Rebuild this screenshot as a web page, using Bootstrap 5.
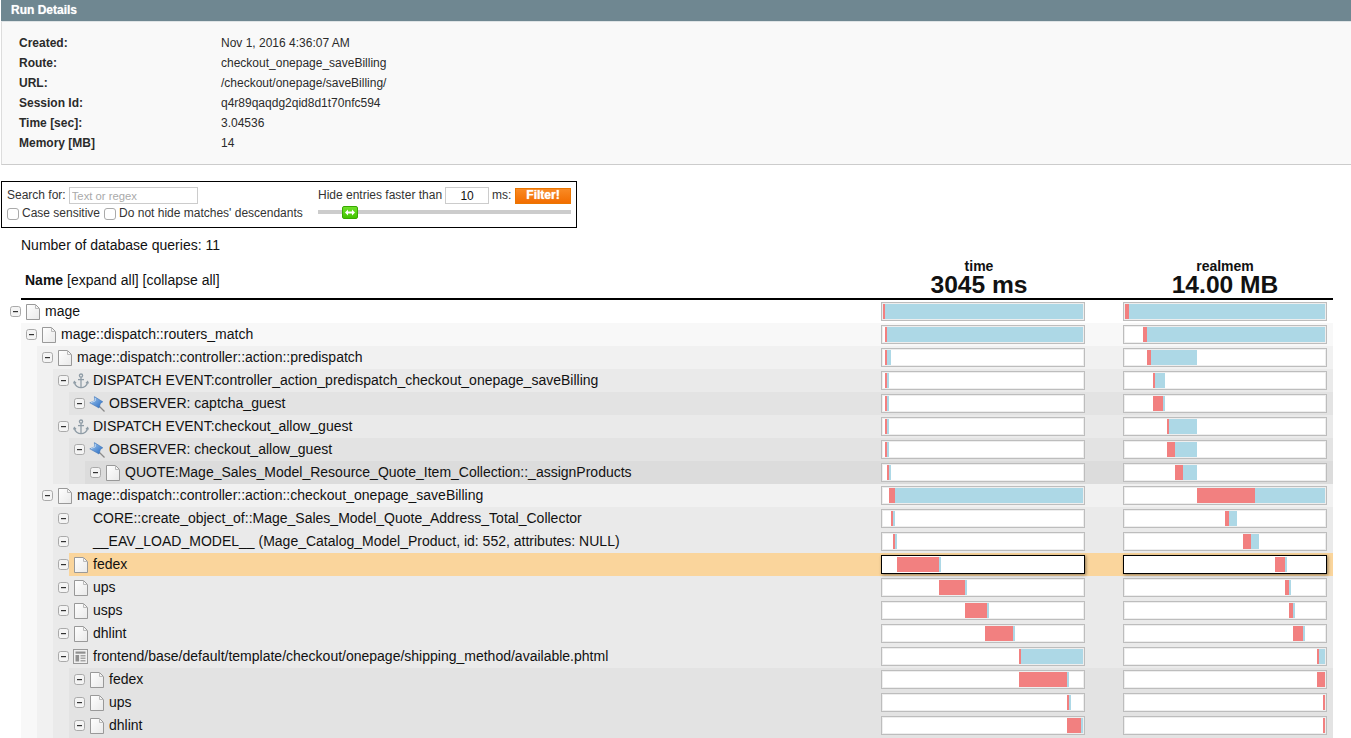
<!DOCTYPE html>
<html lang="en">
<head>
<meta charset="utf-8">
<title>Run Details</title>
<link href="https://cdn.jsdelivr.net/npm/bootstrap@5.3.0/dist/css/bootstrap.min.css" rel="stylesheet">
<style>
html,body{height:738px;overflow:hidden}
body{font-family:"Liberation Sans",Arial,sans-serif;font-size:12px;color:#111;background:#fff}
.head-bar{margin-left:1px;height:22px;background:#6f8791;border-bottom:1px solid #dfe4e6;color:#fff;font-weight:700;font-size:12px;line-height:20px;padding-left:10px;text-shadow:0 0 1px rgba(255,255,255,.6)}
.info-panel{margin-left:1px;background:#f9f9f9;border-bottom:1px solid #ccc;border-left:1px solid #ddd;height:143px;padding:11px 0 0 17px;color:#2b2b2b;line-height:20px}
.info-label{width:202px;font-weight:700}
.filter-box{margin:16px 0 0 1px;width:576px;height:47px;border:1px solid #000;padding:5px 5px 0 5px;color:#333}
.filter-left{width:311px}
.filter-right{width:253px}
.line1{height:17px;line-height:17px}
.line2{height:14px;margin-top:3px;line-height:13px}
.line2 label{margin-top:-2px}
.txt-search{width:129px;height:17px;border:1px solid #ccc;margin-left:3px;font-size:11.3px;padding:1px 2px 0;color:#555;font-family:inherit;outline:0}
.txt-search::placeholder{color:#aaa}
.txt-ms{width:44px;height:17px;border:1px solid #ccc;margin:0 3px;font-size:12px;text-align:center;padding:2px 0 0;color:#111;font-family:inherit}
.fake-check{width:12px;height:12px;margin:0 3px 0 0;appearance:none;border:1px solid #aaa;border-radius:3px;background:#fff;flex:none}
.btn-filter{width:56px;height:16px;padding:0;margin-left:3px;border:1px solid #ea7601;border-radius:0;background:linear-gradient(#f98a24,#f26d00);color:#fff;font-weight:700;font-size:12px;line-height:13px;text-shadow:0 0 1px #fff}
.slide-track{margin-top:6px;height:4px;background:#ccc}
.slide-knob{position:absolute;left:24px;top:-4px;width:16px;height:13px;background:linear-gradient(#6fe02a,#41c300);border:1px solid #37a800;border-radius:2px;display:flex;align-items:center;justify-content:center}
.db-count{margin:9px 0 0 21px;font-size:14px;line-height:16px;color:#111}
.tree-head{margin:0 18px 0 21px;height:47px;border-bottom:2px solid #000;padding-left:4px}
.name-cell{font-size:14px;line-height:16px;padding-top:19px}
.head-col{width:204px;text-align:center;font-weight:700;line-height:1}
.head-col-time{padding-right:8px;margin-right:38px}
.head-col-mem{margin-right:6px}
.metric-name{font-size:14px;line-height:14px;padding-top:6px;box-sizing:content-box}
.metric-total{font-size:24.6px;line-height:24px}
.tree{margin:0 18px 0 5px}
.kids{margin-left:16px;background:rgba(0,0,0,.028)}
.nrow{height:23px}
.tgl{width:16px;flex:none;padding-left:5px;display:flex;align-items:center}
.tgl svg,.ico{display:block;flex:none}
.ncontent{height:23px;min-width:0;padding-left:5px}
.ncontent.sel{background:#fad59c}
.ico{margin-right:5px}
.ico-wide{margin-left:-1px;margin-right:4px}
.ico-tpl{margin-left:-1px}
.noico{width:19px;flex:none}
.nlabel{font-size:14px;line-height:23px;white-space:nowrap;color:#111}
.pbar{width:204px;height:19px;border:1px solid #bdbdbd;box-shadow:inset 0 0 0 1px #eee;padding:1px;background:#fff;flex:none}
.pbar-time{margin-right:38px}
.pbar-mem{margin-right:6px}
.sel .pbar{border-color:#000;box-shadow:1px 1px 3px rgba(0,0,0,.45)}
.seg-r,.seg-b{display:block;height:15px;flex:none}
.seg-r{background:#f28080}
.seg-b{background:#add8e6}
</style>
</head>
<body>
<svg width="0" height="0" class="position-absolute">
<defs>
<linearGradient id="docg" x1="0" y1="0" x2="1" y2="1"><stop offset="0" stop-color="#fff"/><stop offset="1" stop-color="#e9e9e9"/></linearGradient>
<linearGradient id="ping" x1="0" y1="0" x2="1" y2="1"><stop offset="0" stop-color="#a6ccf2"/><stop offset="1" stop-color="#2468c0"/></linearGradient>
<symbol id="tg" viewBox="0 0 11 11"><rect x=".5" y=".5" width="10" height="10" rx="2.2" fill="#f4f4f4" stroke="#aaa"/><rect x="3" y="5" width="5" height="1.2" fill="#333"/></symbol>
<symbol id="doc" viewBox="0 0 14 16"><path d="M.5.5H9.5L13.5 4.5V15.5H.5Z" fill="url(#docg)" stroke="#999"/><path d="M9.5.5V4.5H13.5" fill="none" stroke="#bbb"/></symbol>
<symbol id="anc" viewBox="0 0 16 16"><g fill="none" stroke="#8f9ca6" stroke-width="1.3"><circle cx="8" cy="2.6" r="1.6"/><path d="M8 4.2V14.6"/><path d="M5 6.6H11"/><path d="M1.4 9.2C1.8 12.6 5 14.6 8 14.6S14.2 12.6 14.6 9.2"/><path d="M.6 10.6 1.4 8.6 3 10.2M15.4 10.6 14.6 8.6 13 10.2"/></g></symbol>
<symbol id="pin" viewBox="0 0 16 16"><path d="M10 10 15.5 15.5" stroke="#8a8a8a" stroke-width="1.3"/><path d="M5.4.6 13.8 5.8 11.4 7.4 10 12 .8 6.8 5.6 4.8Z" fill="url(#ping)" stroke="#3f76b8" stroke-width=".6"/><path d="M1.8 6.6 6.2 5 6.2 2" fill="none" stroke="#d4e6f8" stroke-width=".8"/></symbol>
<symbol id="tpl" viewBox="0 0 15 15"><rect x=".5" y=".5" width="14" height="14" fill="#f0f0f0" stroke="#999"/><rect x="2.5" y="2.5" width="10" height="2.2" fill="#8f8f8f"/><rect x="2.5" y="6" width="3.6" height="6.5" fill="#8f8f8f"/><rect x="7.5" y="6" width="5" height="1.5" fill="#a5a5a5"/><rect x="7.5" y="8.5" width="5" height="1.5" fill="#a5a5a5"/><rect x="7.5" y="11" width="5" height="1.5" fill="#a5a5a5"/></symbol>
</defs>
</svg>

<div class="head-bar">Run Details</div>
<div class="info-panel">
  <div class="d-flex"><div class="info-label">Created:</div><div>Nov 1, 2016 4:36:07 AM</div></div>
  <div class="d-flex"><div class="info-label">Route:</div><div>checkout_onepage_saveBilling</div></div>
  <div class="d-flex"><div class="info-label">URL:</div><div>/checkout/onepage/saveBilling/</div></div>
  <div class="d-flex"><div class="info-label">Session Id:</div><div>q4r89qaqdg2qid8d1t70nfc594</div></div>
  <div class="d-flex"><div class="info-label">Time [sec]:</div><div>3.04536</div></div>
  <div class="d-flex"><div class="info-label">Memory [MB]</div><div>14</div></div>
</div>

<form class="filter-box d-flex">
  <div class="filter-left">
    <div class="line1 d-flex align-items-center"><label for="q">Search for:</label><input id="q" class="txt-search" type="text" placeholder="Text or regex"></div>
    <div class="line2 d-flex align-items-center">
      <input class="fake-check" type="checkbox" id="c1"><label for="c1" class="me-1">Case sensitive</label>
      <input class="fake-check" type="checkbox" id="c2"><label for="c2">Do not hide matches' descendants</label>
    </div>
  </div>
  <div class="filter-right">
    <div class="line1 d-flex align-items-center"><span>Hide entries faster than</span><input class="txt-ms" type="text" value="10"><span>ms:</span><button type="button" class="btn-filter ms-auto">Filter!</button></div>
    <div class="slide-track position-relative"><div class="slide-knob"><svg width="10" height="7" viewBox="0 0 10 7"><path d="M0 3.5 3 .5V2.5H7V.5L10 3.5 7 6.5V4.5H3V6.5Z" fill="#fff"/></svg></div></div>
  </div>
</form>

<div class="db-count">Number of database queries: 11</div>

<div class="tree-head d-flex">
  <div class="name-cell flex-grow-1"><b>Name</b> [expand all] [collapse all]</div>
  <div class="head-col head-col-time"><div class="metric-name">time</div><div class="metric-total">3045 ms</div></div>
  <div class="head-col head-col-mem"><div class="metric-name">realmem</div><div class="metric-total">14.00 MB</div></div>
</div>

<div class="tree">
  <div class="nrow d-flex"><div class="tgl"><svg width="11" height="11"><use href="#tg"/></svg></div><div class="ncontent d-flex flex-grow-1 align-items-center"><svg class="ico" width="14" height="16"><use href="#doc"/></svg><span class="nlabel flex-grow-1">mage</span>
    <div class="pbar pbar-time d-flex"><i class="seg-r" style="margin-left:0;width:2px"></i><i class="seg-b" style="width:198px"></i></div>
    <div class="pbar pbar-mem d-flex"><i class="seg-r" style="margin-left:0;width:4px"></i><i class="seg-b" style="width:196px"></i></div></div></div>
  <div class="kids">
    <div class="nrow d-flex"><div class="tgl"><svg width="11" height="11"><use href="#tg"/></svg></div><div class="ncontent d-flex flex-grow-1 align-items-center"><svg class="ico" width="14" height="16"><use href="#doc"/></svg><span class="nlabel flex-grow-1">mage::dispatch::routers_match</span>
      <div class="pbar pbar-time d-flex"><i class="seg-r" style="margin-left:2px;width:2px"></i><i class="seg-b" style="width:196px"></i></div>
      <div class="pbar pbar-mem d-flex"><i class="seg-r" style="margin-left:18px;width:4px"></i><i class="seg-b" style="width:178px"></i></div></div></div>
    <div class="kids">
      <div class="nrow d-flex"><div class="tgl"><svg width="11" height="11"><use href="#tg"/></svg></div><div class="ncontent d-flex flex-grow-1 align-items-center"><svg class="ico" width="14" height="16"><use href="#doc"/></svg><span class="nlabel flex-grow-1">mage::dispatch::controller::action::predispatch</span>
        <div class="pbar pbar-time d-flex"><i class="seg-r" style="margin-left:2px;width:2px"></i><i class="seg-b" style="width:4px"></i></div>
        <div class="pbar pbar-mem d-flex"><i class="seg-r" style="margin-left:22px;width:4px"></i><i class="seg-b" style="width:46px"></i></div></div></div>
      <div class="kids">
        <div class="nrow d-flex"><div class="tgl"><svg width="11" height="11"><use href="#tg"/></svg></div><div class="ncontent d-flex flex-grow-1 align-items-center"><svg class="ico ico-wide" width="16" height="16"><use href="#anc"/></svg><span class="nlabel flex-grow-1">DISPATCH EVENT:controller_action_predispatch_checkout_onepage_saveBilling</span>
          <div class="pbar pbar-time d-flex"><i class="seg-r" style="margin-left:2px;width:2px"></i><i class="seg-b" style="width:2px"></i></div>
          <div class="pbar pbar-mem d-flex"><i class="seg-r" style="margin-left:28px;width:2px"></i><i class="seg-b" style="width:10px"></i></div></div></div>
        <div class="kids">
          <div class="nrow d-flex"><div class="tgl"><svg width="11" height="11"><use href="#tg"/></svg></div><div class="ncontent d-flex flex-grow-1 align-items-center"><svg class="ico ico-wide" width="16" height="16"><use href="#pin"/></svg><span class="nlabel flex-grow-1">OBSERVER: captcha_guest</span>
            <div class="pbar pbar-time d-flex"><i class="seg-r" style="margin-left:2px;width:2px"></i><i class="seg-b" style="width:2px"></i></div>
            <div class="pbar pbar-mem d-flex"><i class="seg-r" style="margin-left:28px;width:10px"></i><i class="seg-b" style="width:2px"></i></div></div></div>
        </div>
        <div class="nrow d-flex"><div class="tgl"><svg width="11" height="11"><use href="#tg"/></svg></div><div class="ncontent d-flex flex-grow-1 align-items-center"><svg class="ico ico-wide" width="16" height="16"><use href="#anc"/></svg><span class="nlabel flex-grow-1">DISPATCH EVENT:checkout_allow_guest</span>
          <div class="pbar pbar-time d-flex"><i class="seg-r" style="margin-left:2px;width:2px"></i><i class="seg-b" style="width:2px"></i></div>
          <div class="pbar pbar-mem d-flex"><i class="seg-r" style="margin-left:42px;width:2px"></i><i class="seg-b" style="width:28px"></i></div></div></div>
        <div class="kids">
          <div class="nrow d-flex"><div class="tgl"><svg width="11" height="11"><use href="#tg"/></svg></div><div class="ncontent d-flex flex-grow-1 align-items-center"><svg class="ico ico-wide" width="16" height="16"><use href="#pin"/></svg><span class="nlabel flex-grow-1">OBSERVER: checkout_allow_guest</span>
            <div class="pbar pbar-time d-flex"><i class="seg-r" style="margin-left:2px;width:2px"></i><i class="seg-b" style="width:2px"></i></div>
            <div class="pbar pbar-mem d-flex"><i class="seg-r" style="margin-left:42px;width:8px"></i><i class="seg-b" style="width:22px"></i></div></div></div>
          <div class="kids">
            <div class="nrow d-flex"><div class="tgl"><svg width="11" height="11"><use href="#tg"/></svg></div><div class="ncontent d-flex flex-grow-1 align-items-center"><svg class="ico" width="14" height="16"><use href="#doc"/></svg><span class="nlabel flex-grow-1">QUOTE:Mage_Sales_Model_Resource_Quote_Item_Collection::_assignProducts</span>
              <div class="pbar pbar-time d-flex"><i class="seg-r" style="margin-left:4px;width:2px"></i><i class="seg-b" style="width:2px"></i></div>
              <div class="pbar pbar-mem d-flex"><i class="seg-r" style="margin-left:50px;width:8px"></i><i class="seg-b" style="width:14px"></i></div></div></div>
          </div>
        </div>
      </div>
      <div class="nrow d-flex"><div class="tgl"><svg width="11" height="11"><use href="#tg"/></svg></div><div class="ncontent d-flex flex-grow-1 align-items-center"><svg class="ico" width="14" height="16"><use href="#doc"/></svg><span class="nlabel flex-grow-1">mage::dispatch::controller::action::checkout_onepage_saveBilling</span>
        <div class="pbar pbar-time d-flex"><i class="seg-r" style="margin-left:6px;width:6px"></i><i class="seg-b" style="width:188px"></i></div>
        <div class="pbar pbar-mem d-flex"><i class="seg-r" style="margin-left:72px;width:58px"></i><i class="seg-b" style="width:70px"></i></div></div></div>
      <div class="kids">
        <div class="nrow d-flex"><div class="tgl"><svg width="11" height="11"><use href="#tg"/></svg></div><div class="ncontent d-flex flex-grow-1 align-items-center"><span class="noico"></span><span class="nlabel flex-grow-1">CORE::create_object_of::Mage_Sales_Model_Quote_Address_Total_Collector</span>
          <div class="pbar pbar-time d-flex"><i class="seg-r" style="margin-left:8px;width:2px"></i><i class="seg-b" style="width:2px"></i></div>
          <div class="pbar pbar-mem d-flex"><i class="seg-r" style="margin-left:100px;width:4px"></i><i class="seg-b" style="width:8px"></i></div></div></div>
        <div class="nrow d-flex"><div class="tgl"><svg width="11" height="11"><use href="#tg"/></svg></div><div class="ncontent d-flex flex-grow-1 align-items-center"><span class="noico"></span><span class="nlabel flex-grow-1">__EAV_LOAD_MODEL__ (Mage_Catalog_Model_Product, id: 552, attributes: NULL)</span>
          <div class="pbar pbar-time d-flex"><i class="seg-r" style="margin-left:10px;width:2px"></i><i class="seg-b" style="width:2px"></i></div>
          <div class="pbar pbar-mem d-flex"><i class="seg-r" style="margin-left:118px;width:8px"></i><i class="seg-b" style="width:8px"></i></div></div></div>
        <div class="nrow d-flex"><div class="tgl"><svg width="11" height="11"><use href="#tg"/></svg></div><div class="ncontent sel d-flex flex-grow-1 align-items-center"><svg class="ico" width="14" height="16"><use href="#doc"/></svg><span class="nlabel flex-grow-1">fedex</span>
          <div class="pbar pbar-time d-flex"><i class="seg-r" style="margin-left:14px;width:42px"></i><i class="seg-b" style="width:2px"></i></div>
          <div class="pbar pbar-mem d-flex"><i class="seg-r" style="margin-left:150px;width:10px"></i><i class="seg-b" style="width:2px"></i></div></div></div>
        <div class="nrow d-flex"><div class="tgl"><svg width="11" height="11"><use href="#tg"/></svg></div><div class="ncontent d-flex flex-grow-1 align-items-center"><svg class="ico" width="14" height="16"><use href="#doc"/></svg><span class="nlabel flex-grow-1">ups</span>
          <div class="pbar pbar-time d-flex"><i class="seg-r" style="margin-left:56px;width:26px"></i><i class="seg-b" style="width:2px"></i></div>
          <div class="pbar pbar-mem d-flex"><i class="seg-r" style="margin-left:160px;width:4px"></i><i class="seg-b" style="width:2px"></i></div></div></div>
        <div class="nrow d-flex"><div class="tgl"><svg width="11" height="11"><use href="#tg"/></svg></div><div class="ncontent d-flex flex-grow-1 align-items-center"><svg class="ico" width="14" height="16"><use href="#doc"/></svg><span class="nlabel flex-grow-1">usps</span>
          <div class="pbar pbar-time d-flex"><i class="seg-r" style="margin-left:82px;width:22px"></i><i class="seg-b" style="width:2px"></i></div>
          <div class="pbar pbar-mem d-flex"><i class="seg-r" style="margin-left:164px;width:4px"></i><i class="seg-b" style="width:2px"></i></div></div></div>
        <div class="nrow d-flex"><div class="tgl"><svg width="11" height="11"><use href="#tg"/></svg></div><div class="ncontent d-flex flex-grow-1 align-items-center"><svg class="ico" width="14" height="16"><use href="#doc"/></svg><span class="nlabel flex-grow-1">dhlint</span>
          <div class="pbar pbar-time d-flex"><i class="seg-r" style="margin-left:102px;width:28px"></i><i class="seg-b" style="width:2px"></i></div>
          <div class="pbar pbar-mem d-flex"><i class="seg-r" style="margin-left:168px;width:10px"></i><i class="seg-b" style="width:2px"></i></div></div></div>
        <div class="nrow d-flex"><div class="tgl"><svg width="11" height="11"><use href="#tg"/></svg></div><div class="ncontent d-flex flex-grow-1 align-items-center"><svg class="ico ico-tpl" width="15" height="15"><use href="#tpl"/></svg><span class="nlabel flex-grow-1">frontend/base/default/template/checkout/onepage/shipping_method/available.phtml</span>
          <div class="pbar pbar-time d-flex"><i class="seg-r" style="margin-left:136px;width:2px"></i><i class="seg-b" style="width:62px"></i></div>
          <div class="pbar pbar-mem d-flex"><i class="seg-r" style="margin-left:192px;width:2px"></i><i class="seg-b" style="width:6px"></i></div></div></div>
        <div class="kids pb-1">
          <div class="nrow d-flex"><div class="tgl"><svg width="11" height="11"><use href="#tg"/></svg></div><div class="ncontent d-flex flex-grow-1 align-items-center"><svg class="ico" width="14" height="16"><use href="#doc"/></svg><span class="nlabel flex-grow-1">fedex</span>
            <div class="pbar pbar-time d-flex"><i class="seg-r" style="margin-left:136px;width:48px"></i><i class="seg-b" style="width:2px"></i></div>
            <div class="pbar pbar-mem d-flex"><i class="seg-r" style="margin-left:192px;width:8px"></i></div></div></div>
          <div class="nrow d-flex"><div class="tgl"><svg width="11" height="11"><use href="#tg"/></svg></div><div class="ncontent d-flex flex-grow-1 align-items-center"><svg class="ico" width="14" height="16"><use href="#doc"/></svg><span class="nlabel flex-grow-1">ups</span>
            <div class="pbar pbar-time d-flex"><i class="seg-r" style="margin-left:184px;width:2px"></i><i class="seg-b" style="width:2px"></i></div>
            <div class="pbar pbar-mem d-flex"><i class="seg-r" style="margin-left:198px;width:2px"></i></div></div></div>
          <div class="nrow d-flex"><div class="tgl"><svg width="11" height="11"><use href="#tg"/></svg></div><div class="ncontent d-flex flex-grow-1 align-items-center"><svg class="ico" width="14" height="16"><use href="#doc"/></svg><span class="nlabel flex-grow-1">dhlint</span>
            <div class="pbar pbar-time d-flex"><i class="seg-r" style="margin-left:184px;width:14px"></i><i class="seg-b" style="width:2px"></i></div>
            <div class="pbar pbar-mem d-flex"><i class="seg-r" style="margin-left:198px;width:2px"></i></div></div></div>
        </div>
      </div>
    </div>
  </div>
</div>
</body>
</html>
